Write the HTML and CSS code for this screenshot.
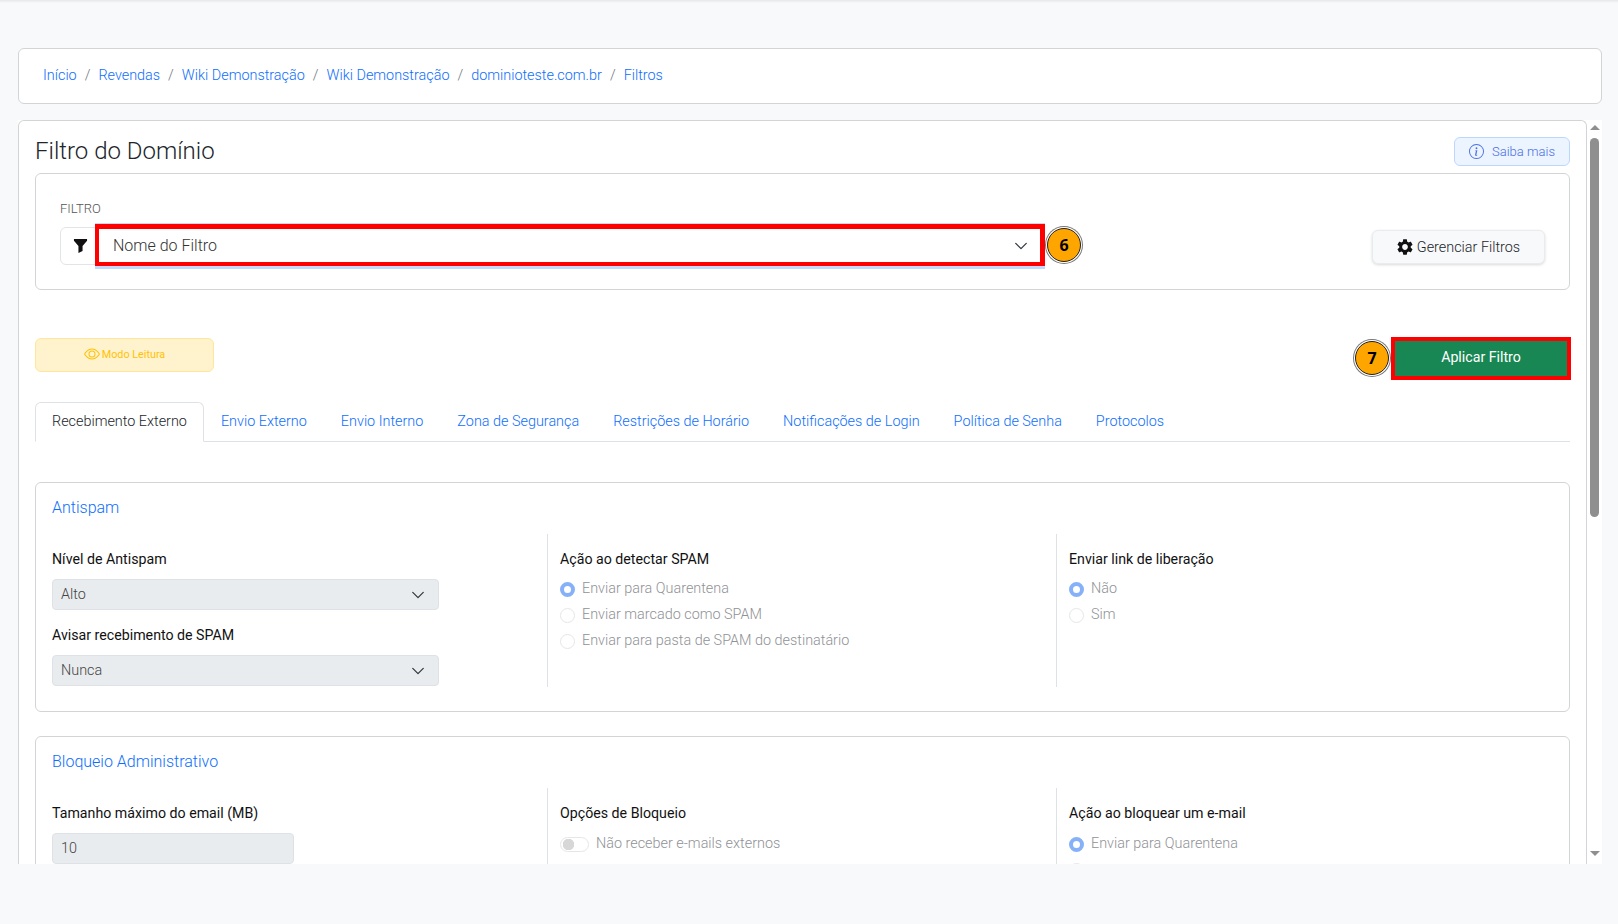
FILE: index.html
```html
<!DOCTYPE html>
<html lang="pt-BR">
<head>
    <meta charset="UTF-8">
    <meta name="viewport" content="width=device-width, initial-scale=1.0">
    <title>Filtro do Domínio</title>
    <link rel="stylesheet" href="styles.css">
</head>
<body>
    <div class="top-edge"></div>
    <div class="page">
        <!-- Breadcrumb -->
        <nav class="breadcrumb-card">
            <a href="#">Início</a><span class="sep">/</span>
            <a href="#">Revendas</a><span class="sep">/</span>
            <a href="#">Wiki Demonstração</a><span class="sep">/</span>
            <a href="#">Wiki Demonstração</a><span class="sep">/</span>
            <a href="#">dominioteste.com.br</a><span class="sep">/</span>
            <a href="#">Filtros</a>
        </nav>

        <div class="main-wrap">
            <div class="main-card">
                <div class="title-row">
                    <h1>Filtro do Domínio</h1>
                    <a href="#" class="btn-saiba">
                        <svg class="icon-info" viewBox="0 0 16 16" fill="currentColor"><path d="M8 15A7 7 0 1 1 8 1a7 7 0 0 1 0 14m0 1A8 8 0 1 0 8 0a8 8 0 0 0 0 16"/><path d="m8.93 6.588-2.29.287-.082.38.45.083c.294.07.352.176.288.469l-.738 3.468c-.194.897.105 1.319.808 1.319.545 0 1.178-.252 1.465-.598l.088-.42c-.2.176-.492.246-.686.246-.275 0-.375-.193-.304-.533zM9 4.5a1 1 0 1 1-2 0 1 1 0 0 1 2 0"/></svg>
                        Saiba mais
                    </a>
                </div>

                <!-- Filter selector -->
                <div class="filter-card">
                    <div class="filter-left">
                        <div class="filter-label">FILTRO</div>
                        <div class="filter-row">
                            <div class="filter-addon">
                                <svg class="icon-funnel" viewBox="0 0 16 16" fill="currentColor"><path d="M1 1h14v1.8L10.2 8.4v5.4L5.8 16V8.4L1 2.8z"/></svg>
                            </div>
                            <div class="filter-select">
                                <span>Nome do Filtro</span>
                                <svg class="chevron" viewBox="0 0 16 16"><path d="m2 5 6 6 6-6"/></svg>
                            </div>
                            <div class="step-badge">6</div>
                        </div>
                    </div>
                    <button class="btn-gerenciar">
                        <svg class="icon-gear" viewBox="2 2 20 20" fill="currentColor"><path d="M19.14 12.94c.04-.3.06-.61.06-.94 0-.32-.02-.64-.07-.94l2.03-1.58c.18-.14.23-.41.12-.61l-1.92-3.32c-.12-.22-.37-.29-.59-.22l-2.39.96c-.5-.38-1.03-.7-1.62-.94l-.36-2.54c-.04-.24-.24-.41-.48-.41h-3.84c-.24 0-.43.17-.47.41l-.36 2.54c-.59.24-1.13.57-1.62.94l-2.39-.96c-.22-.08-.47 0-.59.22L2.74 8.87c-.12.21-.08.47.12.61l2.03 1.58c-.05.3-.09.63-.09.94s.02.64.07.94l-2.03 1.58c-.18.14-.23.41-.12.61l1.92 3.32c.12.22.37.29.59.22l2.39-.96c.5.38 1.03.7 1.62.94l.36 2.54c.05.24.24.41.48.41h3.84c.24 0 .44-.17.47-.41l.36-2.54c.59-.24 1.13-.56 1.62-.94l2.39.96c.22.08.47 0 .59-.22l1.92-3.32c.12-.22.07-.47-.12-.61l-2.01-1.58zM12 15.6c-1.98 0-3.6-1.62-3.6-3.6s1.62-3.6 3.6-3.6 3.6 1.62 3.6 3.6-1.62 3.6-3.6 3.6z"/></svg>
                        Gerenciar Filtros
                    </button>
                </div>

                <div class="action-row">
                    <div class="read-mode">
                        <svg class="icon-eye" viewBox="0 0 16 16" fill="currentColor"><path d="M16 8s-3-5.5-8-5.5S0 8 0 8s3 5.5 8 5.5S16 8 16 8M1.173 8a13 13 0 0 1 1.66-2.043C4.12 4.668 5.88 3.5 8 3.5s3.879 1.168 5.168 2.457A13 13 0 0 1 14.828 8q-.086.13-.195.288c-.335.48-.83 1.12-1.465 1.755C11.879 11.332 10.119 12.5 8 12.5s-3.879-1.168-5.168-2.457A13 13 0 0 1 1.172 8z"/><path d="M8 5.5a2.5 2.5 0 1 0 0 5 2.5 2.5 0 0 0 0-5M4.5 8a3.5 3.5 0 1 1 7 0 3.5 3.5 0 0 1-7 0"/></svg>
                        Modo Leitura
                    </div>
                    <div class="apply-group">
                        <div class="step-badge">7</div>
                        <button class="btn-aplicar">Aplicar Filtro</button>
                    </div>
                </div>

                <!-- Tabs -->
                <ul class="tabs">
                    <li class="active">Recebimento Externo</li>
                    <li>Envio Externo</li>
                    <li>Envio Interno</li>
                    <li>Zona de Segurança</li>
                    <li>Restrições de Horário</li>
                    <li>Notificações de Login</li>
                    <li>Política de Senha</li>
                    <li>Protocolos</li>
                </ul>

                <!-- Antispam -->
                <section class="group-card antispam">
                    <h2>Antispam</h2>
                    <div class="group-cols">
                        <div class="col">
                            <div class="field-label">Nível de Antispam</div>
                            <div class="fake-select"><span>Alto</span><svg class="chevron" viewBox="0 0 16 16"><path d="m2 5 6 6 6-6"/></svg></div>
                            <div class="field-label second">Avisar recebimento de SPAM</div>
                            <div class="fake-select"><span>Nunca</span><svg class="chevron" viewBox="0 0 16 16"><path d="m2 5 6 6 6-6"/></svg></div>
                        </div>
                        <div class="col divided">
                            <div class="field-label">Ação ao detectar SPAM</div>
                            <div class="radio-row"><span class="radio checked"></span>Enviar para Quarentena</div>
                            <div class="radio-row"><span class="radio"></span>Enviar marcado como SPAM</div>
                            <div class="radio-row"><span class="radio"></span>Enviar para pasta de SPAM do destinatário</div>
                        </div>
                        <div class="col divided">
                            <div class="field-label">Enviar link de liberação</div>
                            <div class="radio-row"><span class="radio checked"></span>Não</div>
                            <div class="radio-row"><span class="radio"></span>Sim</div>
                        </div>
                    </div>
                </section>

                <!-- Bloqueio -->
                <section class="group-card bloqueio">
                    <h2>Bloqueio Administrativo</h2>
                    <div class="group-cols">
                        <div class="col">
                            <div class="field-label">Tamanho máximo do email (MB)</div>
                            <div class="fake-input">10</div>
                        </div>
                        <div class="col divided">
                            <div class="field-label">Opções de Bloqueio</div>
                            <div class="radio-row"><span class="switch"></span>Não receber e-mails externos</div>
                        </div>
                        <div class="col divided">
                            <div class="field-label">Ação ao bloquear um e-mail</div>
                            <div class="radio-row"><span class="radio checked"></span>Enviar para Quarentena</div>
                            <div class="radio-row"><span class="radio"></span></div>
                        </div>
                    </div>
                </section>
            </div>

            <div class="scrollbar">
                <div class="arrow-up"></div>
                <div class="thumb"></div>
                <div class="arrow-down"></div>
            </div>
        </div>
    </div>
</body>
</html>
```

FILE: styles.css
```css
* {
    box-sizing: border-box;
}

body {
    font-family: Roboto, "Liberation Sans", sans-serif;
    font-size: 14.4px;
    font-weight: 300;
    color: #212529;
    background-color: #f8f9fa;
    margin: 0;
    height: 924px;
    overflow: hidden;
}

a {
    color: #0d6efd;
    text-decoration: none;
}

.top-edge {
    height: 3px;
    background: linear-gradient(#e6e7e9, #f8f9fa);
}

.page {
    padding: 45px 16px 0 18px;
}

/* Breadcrumb */
.breadcrumb-card {
    display: flex;
    align-items: center;
    height: 56px;
    padding: 0 24px 2px;
    background-color: #fff;
    border: 1px solid #d3d4d5;
    border-radius: 6px;
    margin-bottom: 16px;
}

.sep {
    margin: 0 8px;
    color: #6c757d;
}

/* Main panel */
.main-wrap {
    display: flex;
    height: 744px;
    background-color: #fff;
}

.main-card {
    flex: 1;
    min-width: 0;
    overflow: hidden;
    padding: 0 16px;
    border: 1px solid #d3d4d5;
    border-bottom: none;
    border-radius: 6px 6px 0 0;
}

.title-row {
    display: flex;
    justify-content: space-between;
    align-items: flex-start;
    height: 52px;
    padding-top: 16px;
}

h1 {
    margin: 1px 0 0;
    font-size: 24px;
    font-weight: 300;
    line-height: 27px;
}

.btn-saiba {
    display: flex;
    align-items: center;
    justify-content: center;
    gap: 8px;
    width: 116px;
    height: 29px;
    color: #4a6fe3;
    font-size: 13px;
    background-color: #ecf4ff;
    border: 1px solid #bdd7fc;
    border-radius: 6px;
}

.icon-info {
    width: 15px;
    height: 15px;
}

/* Filter selector */
.filter-card {
    display: flex;
    justify-content: space-between;
    align-items: flex-start;
    height: 117px;
    padding: 27px 24px 0 24px;
    border: 1px solid #d3d4d5;
    border-radius: 6px;
}

.filter-label {
    font-size: 13px;
    color: #555;
    line-height: 15px;
    margin-bottom: 8px;
}

.filter-row {
    display: flex;
    align-items: center;
    height: 42px;
}

.filter-addon {
    display: flex;
    align-items: center;
    justify-content: center;
    width: 38px;
    height: 38px;
    margin: 2px -3px 0 0;
    padding: 0 0 2px 3px;
    background-color: #fff;
    border: 1px solid #e3e4e6;
    border-radius: 6px 0 0 6px;
    color: #111;
}

.icon-funnel {
    width: 15px;
    height: 15px;
}

.filter-select {
    display: flex;
    align-items: center;
    justify-content: space-between;
    width: 950px;
    height: 42px;
    padding: 0 12px 0 14px;
    font-size: 16px;
    color: #333;
    background-color: #fff;
    border-style: solid;
    border-color: #f00;
    border-width: 5px 5px 4px 4px;
    box-shadow: 0 3px 0 0 #c2d9fe, 0 -1px 0 0 #c2d9fe;
}

.chevron {
    width: 14px;
    height: 14px;
    flex-shrink: 0;
    fill: none;
    stroke: #343a40;
    stroke-width: 1.5;
    stroke-linecap: round;
    stroke-linejoin: round;
}

.step-badge {
    display: flex;
    align-items: center;
    justify-content: center;
    width: 34px;
    height: 34px;
    flex-shrink: 0;
    margin-left: 2px;
    font-family: "Open Sans", "Liberation Sans", sans-serif;
    font-size: 16px;
    font-weight: 700;
    color: #000;
    background-color: #ffa500;
    border: 1px solid #222;
    border-radius: 50%;
    box-shadow: 0 0 0 1px #fff, 0 0 0 2px #777;
}

.btn-gerenciar {
    display: flex;
    align-items: center;
    justify-content: center;
    gap: 4px;
    width: 173px;
    height: 34px;
    margin-top: 29px;
    font-family: inherit;
    font-size: 14.4px;
    font-weight: 300;
    color: #212529;
    background-color: #f8f9fa;
    border: 1px solid #e9ecef;
    border-radius: 6px;
    box-shadow: 0 1px 3px rgba(0, 0, 0, 0.15);
}

.icon-gear {
    width: 16px;
    height: 16px;
    color: #111;
}

/* Action row */
.action-row {
    display: flex;
    justify-content: space-between;
    align-items: flex-start;
    height: 112px;
    padding-top: 48px;
}

.read-mode {
    display: flex;
    align-items: center;
    justify-content: center;
    gap: 2px;
    width: 179px;
    height: 34px;
    padding-bottom: 2px;
    font-size: 10.8px;
    font-weight: 400;
    color: #ffc107;
    background-color: #fff3cd;
    border: 1px solid #ffe69c;
    border-radius: 6px;
}

.icon-eye {
    width: 16px;
    height: 16px;
}

.apply-group {
    display: flex;
    align-items: center;
    margin: -1px -1px 0 0;
}

.apply-group .step-badge {
    margin: 0 2px 1px 0;
}

.btn-aplicar {
    width: 180px;
    height: 43px;
    padding-bottom: 5px;
    font-family: inherit;
    font-size: 14.2px;
    font-weight: 400;
    color: #fff;
    background-color: #198754;
    border: 4px solid #f00;
}

/* Tabs */
.tabs {
    display: flex;
    list-style: none;
    height: 40px;
    margin: 0 0 40px;
    padding: 0;
    border-bottom: 1px solid #dee2e6;
}

.tabs li {
    padding: 0 16px;
    line-height: 38px;
    color: #0d6efd;
    border: 1px solid transparent;
}

.tabs li.active {
    height: 40px;
    color: #212529;
    background-color: #fff;
    border-color: #dee2e6 #dee2e6 #fff;
    border-radius: 6px 6px 0 0;
}

/* Group cards */
.group-card {
    padding: 0 16px;
    border: 1px solid #d3d4d5;
    border-radius: 6px;
    margin-bottom: 24px;
}

.group-card.antispam {
    height: 230px;
}

.group-card h2 {
    margin: 0;
    height: 51px;
    padding-top: 15px;
    font-size: 16px;
    font-weight: 300;
    line-height: 20px;
    color: #0d6efd;
}

.group-cols {
    display: grid;
    grid-template-columns: 495px 509px 1fr;
    height: 153px;
}

.col {
    padding-top: 16px;
}

.col.divided {
    padding-left: 12px;
    border-left: 1px solid #dee2e6;
}

.field-label {
    font-size: 14.2px;
    font-weight: 400;
    line-height: 18px;
    margin-bottom: 11px;
    color: #111;
}

.col.divided .field-label {
    margin-bottom: 7px;
}

.bloqueio .col.divided .field-label {
    margin-bottom: 8px;
}

.field-label.second {
    margin-top: 16px;
}

.fake-select {
    display: flex;
    align-items: center;
    justify-content: space-between;
    width: 387px;
    height: 31px;
    padding: 0 13px 0 8px;
    color: #444;
    background-color: #e9ecef;
    border: 1px solid #dee2e6;
    border-radius: 4px;
}

.fake-input {
    display: flex;
    align-items: center;
    width: 242px;
    height: 31px;
    padding: 0 8px;
    color: #444;
    background-color: #e9ecef;
    border: 1px solid #dee2e6;
    border-radius: 4px;
}

.radio-row {
    display: flex;
    align-items: center;
    height: 26px;
    color: #8f9296;
}

.radio {
    flex-shrink: 0;
    width: 15px;
    height: 15px;
    margin: 2px 7px 0 0;
    background-color: #fff;
    border: 1px solid #e4e6e8;
    border-radius: 50%;
}

.radio.checked {
    border: 4px solid #86b1f9;
}

.switch {
    flex-shrink: 0;
    width: 29px;
    height: 15px;
    margin: 2px 7px 0 0;
    background: radial-gradient(circle at 7.5px 50%, #d7d7d7 5.5px, #fff 6px);
    border: 1px solid #e4e6e8;
    border-radius: 8px;
}

/* Scrollbar */
.scrollbar {
    display: flex;
    flex-direction: column;
    align-items: center;
    width: 15px;
    flex-shrink: 0;
    background-color: #fff;
}

.arrow-up {
    width: 0;
    height: 0;
    margin-top: 5px;
    border-left: 5px solid transparent;
    border-right: 5px solid transparent;
    border-bottom: 5px solid #8f8f8f;
}

.thumb {
    width: 9px;
    height: 379px;
    margin-top: 8px;
    background-color: #8f8f8f;
    border-radius: 5px;
}

.arrow-down {
    width: 0;
    height: 0;
    margin-top: auto;
    margin-bottom: 8px;
    border-left: 5px solid transparent;
    border-right: 5px solid transparent;
    border-top: 5px solid #8f8f8f;
}
```
